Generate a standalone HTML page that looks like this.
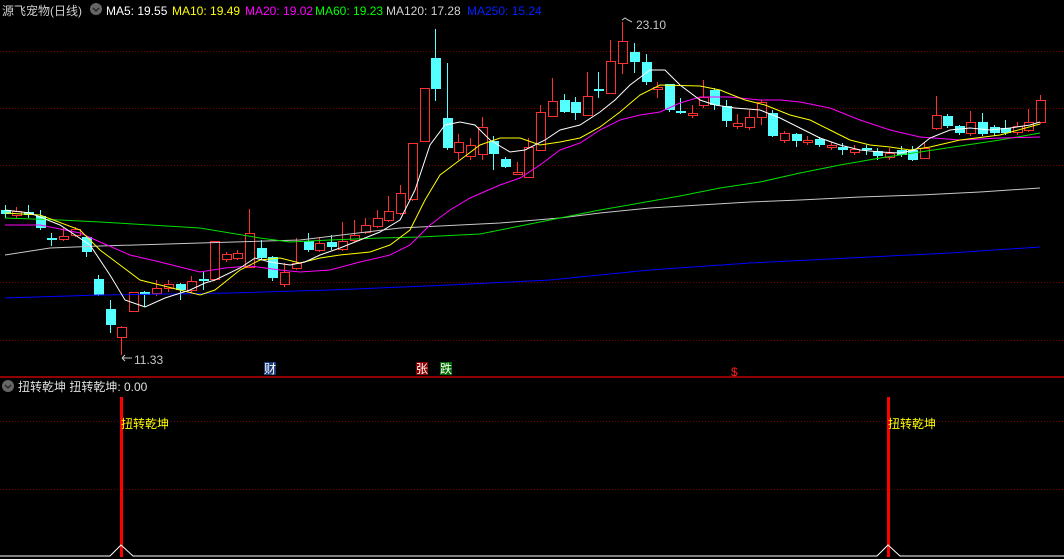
<!DOCTYPE html>
<html><head><meta charset="utf-8"><style>
html,body{margin:0;padding:0;background:#000;width:1064px;height:559px;overflow:hidden}
svg{display:block}
text{font-family:"Liberation Sans","Noto Sans CJK SC",sans-serif;font-size:12px}
</style></head><body>
<svg id="s" width="1064" height="559" xmlns="http://www.w3.org/2000/svg">
<g stroke="#7a0000" stroke-dasharray="1,2" stroke-width="1">
<line x1="0" y1="51.5" x2="1064" y2="51.5"/><line x1="0" y1="108.5" x2="1064" y2="108.5"/>
<line x1="0" y1="165.5" x2="1064" y2="165.5"/><line x1="0" y1="282.5" x2="1064" y2="282.5"/>
<line x1="0" y1="340.5" x2="1064" y2="340.5"/><line x1="0" y1="421.5" x2="1064" y2="421.5"/>
<line x1="0" y1="489.5" x2="1064" y2="489.5"/>
</g>
<line x1="0" y1="377" x2="1064" y2="377" stroke="#c00000" stroke-width="1.5"/>
<g id="c"></g>
<g fill="none" stroke-width="1">
<polyline stroke="#0000ff" points="5,298 100,295 230,293 330,290 450,285 550,280 650,270 750,263 850,258 950,253 1040,247"/>
<polyline stroke="#c8c8c8" points="5,255 50,248 100,246 200,243 300,240 400,228 500,223 560,218 600,213 650,208 700,205 750,202 800,200 860,197 920,195 980,192 1040,188"/>
<polyline stroke="#00e000" points="5,218 60,220 100,222 200,228 260,238 290,242 330,240 380,238 420,237 480,234 520,226 560,218 600,210 640,203 680,196 720,188 760,182 800,173 840,165 880,158 920,152 960,146 1000,140 1040,133"/>
<polyline stroke="#ff00ff" points="5,225 40,225 80,233 100,242 130,255 160,262 200,272 225,268 250,266 280,270 300,272 330,270 360,262 390,255 410,245 430,225 450,210 470,198 500,185 520,178 540,165 560,150 580,143 600,130 620,120 640,115 660,112 680,103 700,97 730,97 760,100 780,100 800,102 830,108 860,120 890,130 920,137 960,140 1000,138 1040,137"/>
<polyline stroke="#ffff00" points="5,213 40,215 80,230 100,250 120,265 140,280 160,285 200,295 215,290 240,270 260,260 280,258 300,263 320,258 340,255 370,252 390,245 410,230 425,200 440,175 460,160 480,145 500,138 520,138 540,145 560,142 580,138 600,127 620,112 640,95 660,85 700,86 720,90 745,100 765,105 790,115 810,120 830,130 850,140 870,145 890,147 910,150 930,147 960,140 1000,135 1040,124"/>
<polyline stroke="#ffffff" points="5,210 30,213 60,225 90,245 110,275 125,300 145,307 165,298 190,290 205,283 215,280 240,268 255,258 270,262 290,265 305,262 320,255 340,248 360,240 380,232 400,220 415,190 430,145 445,125 460,122 475,125 490,140 510,152 525,150 545,140 560,130 580,125 600,112 615,100 630,85 650,70 665,70 680,85 700,100 715,105 735,108 760,110 780,118 800,128 820,138 840,145 860,150 880,152 900,153 915,150 930,138 950,130 970,128 990,130 1010,128 1030,125 1040,122"/>
</g>
<text x="2" y="15" fill="#d0d0d0" font-size="13">源飞宠物(日线)</text>
<circle cx="96" cy="9" r="6" fill="#666"/><path d="M93,8 l3,3 l3,-3" stroke="#222" fill="none" stroke-width="1.3"/>
<text x="106" y="15" fill="#fff">MA5: 19.55</text>
<text x="172" y="15" fill="#ffff00">MA10: 19.49</text>
<text x="245" y="15" fill="#ff00ff">MA20: 19.02</text>
<text x="315" y="15" fill="#00ff00">MA60: 19.23</text>
<text x="386" y="15" fill="#d0d0d0">MA120: 17.28</text>
<text x="467" y="15" fill="#0022ff">MA250: 15.24</text>
<text x="636" y="29" fill="#c8c8c8">23.10</text>
<path d="M622,20 l3,-2 l3,2 l4,2" stroke="#c8c8c8" fill="none"/>
<text x="134" y="364" fill="#c8c8c8">11.33</text>
<path d="M122,358 h10 M122,358 l3,-3 M122,358 l3,3" stroke="#c8c8c8" fill="none"/>
<rect x="264" y="362" width="12" height="13" fill="#1a3a7a"/><text x="264" y="373" fill="#fff">财</text>
<rect x="416" y="362" width="12" height="13" fill="#8a0000"/><text x="416" y="373" fill="#fff">张</text>
<rect x="440" y="362" width="12" height="13" fill="#006a00"/><text x="440" y="373" fill="#fff">跌</text>
<text x="731" y="376" fill="#ff2020" font-size="11">$</text>
<circle cx="8" cy="386" r="6" fill="#666"/><path d="M5,385 l3,3 l3,-3" stroke="#222" fill="none" stroke-width="1.3"/>
<text x="18" y="391" fill="#e0e0e0" font-size="13">扭转乾坤 扭转乾坤: 0.00</text>
<rect x="120" y="397" width="3" height="160" fill="#ff0000"/>
<rect x="887" y="397" width="3" height="160" fill="#ff0000"/>
<text x="121" y="428" fill="#ffff00" font-size="13">扭转乾坤</text>
<text x="888" y="428" fill="#ffff00" font-size="13">扭转乾坤</text>
<polyline fill="none" stroke="#fff" stroke-width="1" points="0,556 110,556 121,545 133,556 877,556 888,545 900,556 1064,556"/>
</svg>
<script>
var d=[[5,'c',210,214,205,218],[16,'r',211,215,207,218],[28,'c',212,215,205,218],[40,'c',216,228,210,230],[51,'c',238,240,233,246],[63,'r',236,239,228,241],[75,'r',229,235,227,237],[86,'c',237,252,236,257],[98,'c',279,295,275,296],[110,'c',309,325,300,333],[121,'r',327,337,326,355],[133,'r',292,311,292,312],[144,'c',292,295,291,307],[156,'r',288,293,280,296],[168,'r',284,288,280,292],[180,'c',284,290,283,300],[191,'r',281,290,276,293],[203,'c',279,281,271,290],[214,'r',241,279,241,281],[226,'r',254,259,252,262],[237,'r',253,258,250,260],[249,'r',233,267,209,268],[261,'c',248,258,240,260],[272,'c',257,278,256,281],[284,'r',272,284,263,287],[296,'r',263,268,238,270],[308,'c',241,250,233,252],[319,'r',243,250,237,252],[331,'c',242,247,235,250],[342,'r',241,249,222,251],[354,'r',235,240,220,242],[365,'r',225,232,218,234],[377,'r',218,226,210,228],[388,'r',211,220,196,222],[400,'r',193,213,185,215],[412,'r',143,199,143,201],[424,'r',88,141,88,142],[435,'c',58,89,29,101],[447,'c',118,148,63,150],[458,'r',142,152,134,160],[470,'r',145,156,138,160],[482,'r',127,154,117,160],[493,'c',141,154,136,170],[505,'c',159,167,157,168],[517,'r',172,173,162,175],[528,'r',147,177,138,178],[540,'r',112,150,105,151],[552,'r',101,116,78,117],[564,'c',100,112,94,113],[575,'c',102,113,97,120],[587,'r',96,115,72,116],[598,'c',89,91,72,98],[610,'r',61,93,40,94],[622,'r',41,63,22,74],[634,'c',52,62,43,73],[646,'c',62,82,54,85],[657,'r',87,89,82,98],[669,'c',84,110,84,112],[680,'c',111,113,98,114],[692,'r',113,115,105,118],[703,'r',97,105,80,108],[714,'c',90,105,88,110],[726,'c',106,121,100,127],[737,'r',123,126,114,129],[749,'r',117,127,110,130],[761,'r',102,117,100,125],[772,'c',113,136,110,137],[784,'r',133,140,131,143],[796,'c',134,141,133,147],[807,'r',140,142,136,145],[819,'c',139,145,137,147],[831,'r',145,146,142,150],[842,'c',147,150,143,155],[854,'r',149,152,145,155],[866,'c',148,150,145,155],[877,'c',151,156,148,160],[889,'r',153,157,148,160],[901,'c',150,155,146,157],[912,'c',150,160,146,161],[924,'r',148,158,142,159],[936,'r',115,128,96,130],[947,'c',116,126,114,128],[959,'c',126,133,125,135],[970,'r',122,133,111,136],[982,'c',122,134,113,136],[994,'c',127,133,125,136],[1005,'c',128,133,120,135],[1017,'r',126,132,122,135],[1028,'r',122,130,109,132],[1040,'r',100,122,95,124]];
var g=document.getElementById('c'),h='';
d.forEach(function(a){var x=a[0],t=a[2],b=a[3],hi=a[4],lo=a[5];if(b-t<2)b=t+2;
if(a[1]=='r'){h+='<line x1="'+(x+.5)+'" y1="'+hi+'" x2="'+(x+.5)+'" y2="'+t+'" stroke="#ff3030"/><line x1="'+(x+.5)+'" y1="'+b+'" x2="'+(x+.5)+'" y2="'+lo+'" stroke="#ff3030"/><rect x="'+(x-4)+'.5" y="'+t+'.5" width="9" height="'+(b-t)+'" fill="none" stroke="#ff3030"/>';}
else{h+='<line x1="'+(x+.5)+'" y1="'+hi+'" x2="'+(x+.5)+'" y2="'+lo+'" stroke="#54ffff"/><rect x="'+(x-4)+'" y="'+t+'" width="10" height="'+(b-t)+'" fill="#54ffff"/>';}});
g.innerHTML=h;
</script>
</body></html>
